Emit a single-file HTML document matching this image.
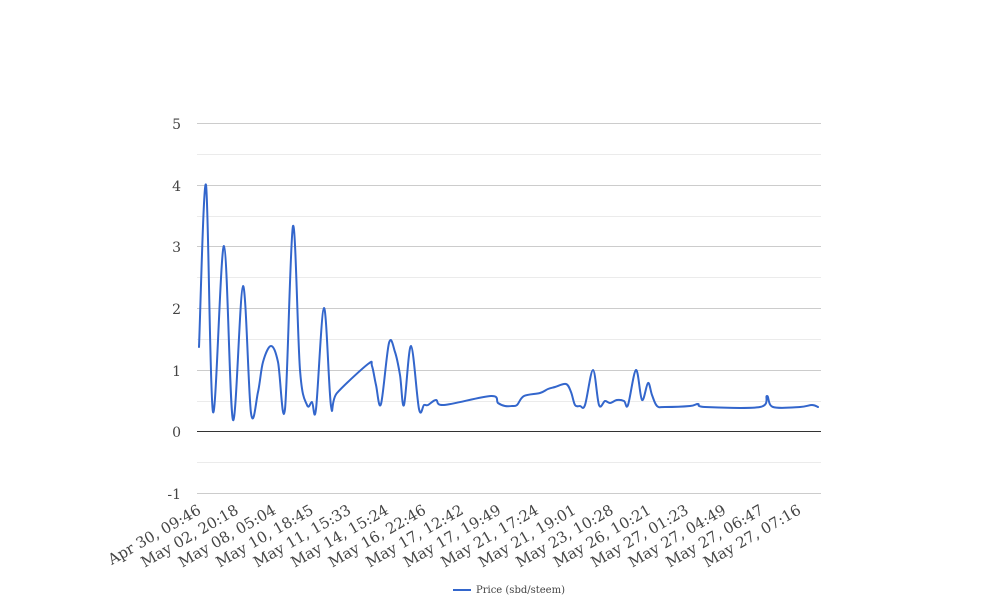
<!DOCTYPE html>
<html><head><meta charset="utf-8"><style>
html,body{margin:0;padding:0;background:#fff;width:1008px;height:616px;overflow:hidden}
svg text{font-family:"DejaVu Serif","Liberation Serif",serif;fill:#444}
</style></head><body>
<svg width="1008" height="616" viewBox="0 0 1008 616" xmlns="http://www.w3.org/2000/svg">
<g stroke="#ebebeb" stroke-width="1">
<line x1="197" x2="821" y1="154.5" y2="154.5"/><line x1="197" x2="821" y1="216.5" y2="216.5"/>
<line x1="197" x2="821" y1="277.5" y2="277.5"/><line x1="197" x2="821" y1="339.5" y2="339.5"/>
<line x1="197" x2="821" y1="401.5" y2="401.5"/><line x1="197" x2="821" y1="462.5" y2="462.5"/>
</g>
<g stroke="#cccccc" stroke-width="1">
<line x1="197" x2="821" y1="123.5" y2="123.5"/><line x1="197" x2="821" y1="185.5" y2="185.5"/>
<line x1="197" x2="821" y1="246.5" y2="246.5"/><line x1="197" x2="821" y1="308.5" y2="308.5"/>
<line x1="197" x2="821" y1="370.5" y2="370.5"/><line x1="197" x2="821" y1="493.5" y2="493.5"/>
</g>
<line x1="197" x2="821" y1="431.5" y2="431.5" stroke="#333" stroke-width="1"/>
<g font-size="14" text-anchor="end">
<text x="181" y="129">5</text><text x="181" y="191">4</text><text x="181" y="252">3</text>
<text x="181" y="314">2</text><text x="181" y="376">1</text><text x="181" y="437">0</text>
<text x="181" y="499">-1</text>
</g>
<path id="ln" fill="none" stroke="#3366cc" stroke-width="2" stroke-linejoin="round" stroke-linecap="round" d=""/>
<g font-size="15" text-anchor="end">
<text transform="translate(202,513) rotate(-30)">Apr 30, 09:46</text>
<text transform="translate(239.5,513) rotate(-30)">May 02, 20:18</text>
<text transform="translate(277,513) rotate(-30)">May 08, 05:04</text>
<text transform="translate(314.5,513) rotate(-30)">May 10, 18:45</text>
<text transform="translate(352,513) rotate(-30)">May 11, 15:33</text>
<text transform="translate(389.5,513) rotate(-30)">May 14, 15:24</text>
<text transform="translate(427,513) rotate(-30)">May 16, 22:46</text>
<text transform="translate(464.5,513) rotate(-30)">May 17, 12:42</text>
<text transform="translate(502,513) rotate(-30)">May 17, 19:49</text>
<text transform="translate(539.5,513) rotate(-30)">May 21, 17:24</text>
<text transform="translate(577,513) rotate(-30)">May 21, 19:01</text>
<text transform="translate(614.5,513) rotate(-30)">May 23, 10:28</text>
<text transform="translate(652,513) rotate(-30)">May 26, 10:21</text>
<text transform="translate(689.5,513) rotate(-30)">May 27, 01:23</text>
<text transform="translate(727,513) rotate(-30)">May 27, 04:49</text>
<text transform="translate(764.5,513) rotate(-30)">May 27, 06:47</text>
<text transform="translate(802,513) rotate(-30)">May 27, 07:16</text>
</g>
<line x1="453" x2="471" y1="590" y2="590" stroke="#3366cc" stroke-width="2"/>
<text x="476" y="593" font-size="10" fill="#222">Price (sbd/steem)</text>
</svg>
<script>
var p=[[199,347],[206,185],[213,412],[224,246],[233,420],[243,286],[251,413],[258,392],[263,362],[271,346],[278,362],[285,409],[293,226],[300,370],[307,405],[312,402],[316,409],[324,308],[331,406],[337,393],[368,364],[372,366],[376,385],[381,404],[389,343],[395,352],[400,375],[404,405],[411,346],[419,409],[424,405],[428,405],[436,400],[444,405],[491,396],[498,403],[505,406],[512,406],[517,405],[524,396],[540,393],[548,389],[555,387],[566,384],[571,392],[575,405],[580,406],[585,405],[593,370],[599,405],[605,401],[610,403],[617,400],[624,401],[628,405],[636,370],[642,400],[648,383],[652,395],[657,406],[665,407],[690,406],[698,404],[705,407],[760,407],[767,396],[773,407],[800,407],[812,405],[818,407]];
var d="M"+p[0][0]+","+p[0][1];
for(var i=0;i<p.length-1;i++){var a=p[i-1]||p[i],b=p[i],c=p[i+1],e=p[i+2]||c,t=0.5/3;
d+=" C"+(b[0]+(c[0]-a[0])*t)+","+(b[1]+(c[1]-a[1])*t)+" "+(c[0]-(e[0]-b[0])*t)+","+(c[1]-(e[1]-b[1])*t)+" "+c[0]+","+c[1];}
document.getElementById("ln").setAttribute("d",d);
</script>
</body></html>
